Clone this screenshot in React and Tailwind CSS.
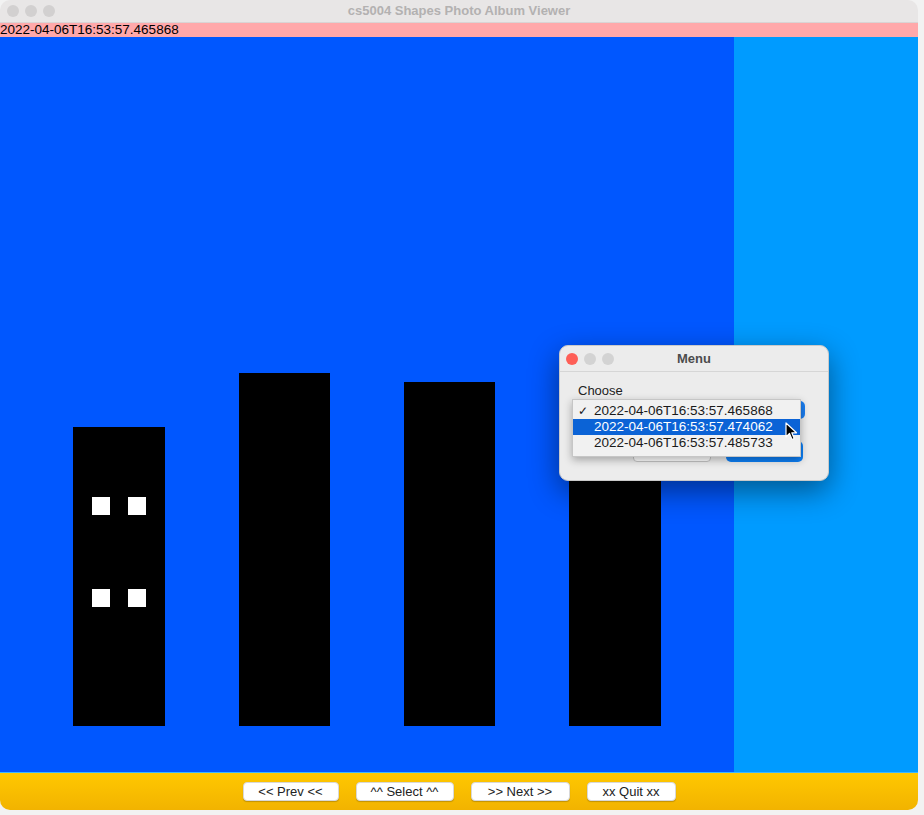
import React from "react";

const font = { fontFamily: '"Liberation Sans", Arial, sans-serif' };

// buildings drawn on the canvas (coords relative to canvas top-left)
const buildings = [
  { x: 73, y: 390, w: 92, h: 299, windows: true },
  { x: 239, y: 336, w: 91, h: 353 },
  { x: 404, y: 345, w: 91, h: 344 },
  { x: 569, y: 330, w: 92, h: 359 },
];

const opts = [
  "2022-04-06T16:53:57.465868",
  "2022-04-06T16:53:57.474062",
  "2022-04-06T16:53:57.485733",
];

function Dot({ color }) {
  return <span className={`block w-3 h-3 rounded-full ${color}`} />;
}

function MenuDialog() {
  return (
    <div className="absolute left-[559px] top-[308px] w-[270px] h-[136px] rounded-[9px] bg-[#ececec] shadow-[0_10px_30px_rgba(0,0,0,0.45)] border border-[#c9c9c9] flex flex-col">
      <div className="relative h-[26px] flex items-center px-[6px] border-b border-[#d6d6d6]">
        <div className="flex gap-[6px]">
          <Dot color="bg-[#fe5f57]" />
          <Dot color="bg-[#d3d3d3]" />
          <Dot color="bg-[#d3d3d3]" />
        </div>
        <span className="absolute inset-0 flex items-center justify-center text-[13px] font-bold text-[#4c4c4c]">Menu</span>
      </div>
      <div className="relative flex-1">
        <div className="pl-[18px] pt-[9px] text-[13px] text-[#222]">Choose</div>
        {/* combo + buttons behind the open popup */}
        <div className="absolute left-[237px] top-[29px] w-[8px] h-[18px] rounded-r-[5px] bg-[#1a7df0]" />
        <div className="absolute left-[73px] top-[73px] w-[78px] h-[17px] rounded-[4px] bg-white border border-[#c4c4c4] text-[12px] leading-[26px] text-[#c8c8c8] flex justify-center overflow-hidden">
          <span className="-mt-[7px]">Cancel</span>
        </div>
        <div className="absolute left-[166px] top-[69px] w-[77px] h-[21px] rounded-[5px] bg-[#0d7ff5]" />
        {/* popup list */}
        <div className="absolute left-[12px] top-[27px] w-[229px] h-[58px] bg-[#f1f1f1] border border-[#c6c6c6] shadow-[0_3px_8px_rgba(0,0,0,0.3)] py-[3px] text-[13.5px] leading-[16px]">
          {opts.map((o, i) => (
            <div key={o} className={`flex items-center h-[16px] ${i === 1 ? "bg-[#0b63d6] text-white" : "text-[#1a1a1a]"}`}>
              <span className="w-[21px] pl-[5px] text-[12px]">{i === 0 ? "✓" : ""}</span>
              <span>{o}</span>
            </div>
          ))}
        </div>
        <svg className="absolute left-[225px] top-[50px]" width="14" height="20" viewBox="0 0 14 20">
          <path d="M1 1 L1 15 L4.5 11.5 L7 17.5 L9.2 16.5 L6.8 10.8 L11.5 10.8 Z" fill="#000" stroke="#fff" strokeWidth="1.2" strokeLinejoin="round" />
        </svg>
      </div>
    </div>
  );
}

function NavButton({ label, w }) {
  return (
    <button className={`h-[19px] ${w} rounded-[4px] bg-white border border-[#d8d8d8] shadow-[0_1px_1px_rgba(0,0,0,0.2)] text-[13px] text-[#222] flex items-center justify-center`}>
      {label}
    </button>
  );
}

export default function App() {
  return (
    <div className="w-[924px] h-[815px] bg-[#f2f2f2] overflow-hidden" style={font}>
      <div className="w-[918px] h-[810px] flex flex-col rounded-[10px] overflow-hidden">
        <div className="relative h-[23px] bg-[#e8e6e6] flex items-center px-[7px] border-b border-[#d9d4d4]">
          <div className="flex gap-[6px]">
            <Dot color="bg-[#d2d0d0]" />
            <Dot color="bg-[#d2d0d0]" />
            <Dot color="bg-[#d2d0d0]" />
          </div>
          <span className="absolute inset-0 flex items-center justify-center text-[13px] font-bold text-[#b3b1b1]">
            cs5004 Shapes Photo Album Viewer
          </span>
        </div>
        <div className="h-[14px] bg-[#ffa8aa] text-[13.5px] leading-[14px] text-black">2022-04-06T16:53:57.465868</div>
        <div className="relative h-[735px] flex">
          <div className="w-[734px] bg-[#0057ff]" />
          <div className="flex-1 bg-[#009bff]" />
          {buildings.map((b, i) => (
            <div
              key={i}
              className="absolute bg-black"
              style={{ left: b.x, top: b.y, width: b.w, height: b.h }}
            >
              {b.windows && (
                <>
                  <span className="absolute left-[19px] top-[70px] w-[18px] h-[18px] bg-white" />
                  <span className="absolute left-[55px] top-[70px] w-[18px] h-[18px] bg-white" />
                  <span className="absolute left-[19px] top-[162px] w-[18px] h-[18px] bg-white" />
                  <span className="absolute left-[55px] top-[162px] w-[18px] h-[18px] bg-white" />
                </>
              )}
            </div>
          ))}
          <MenuDialog />
        </div>
        <div className="flex-1 border-t border-[#3db8ff] bg-gradient-to-b from-[#ffc800] to-[#f2b300] flex items-center justify-center gap-[17px]">
          <NavButton label="<< Prev <<" w="w-[96px]" />
          <NavButton label="^^ Select ^^" w="w-[98px]" />
          <NavButton label=">> Next >>" w="w-[99px]" />
          <NavButton label="xx Quit xx" w="w-[89px]" />
        </div>
      </div>
    </div>
  );
}
